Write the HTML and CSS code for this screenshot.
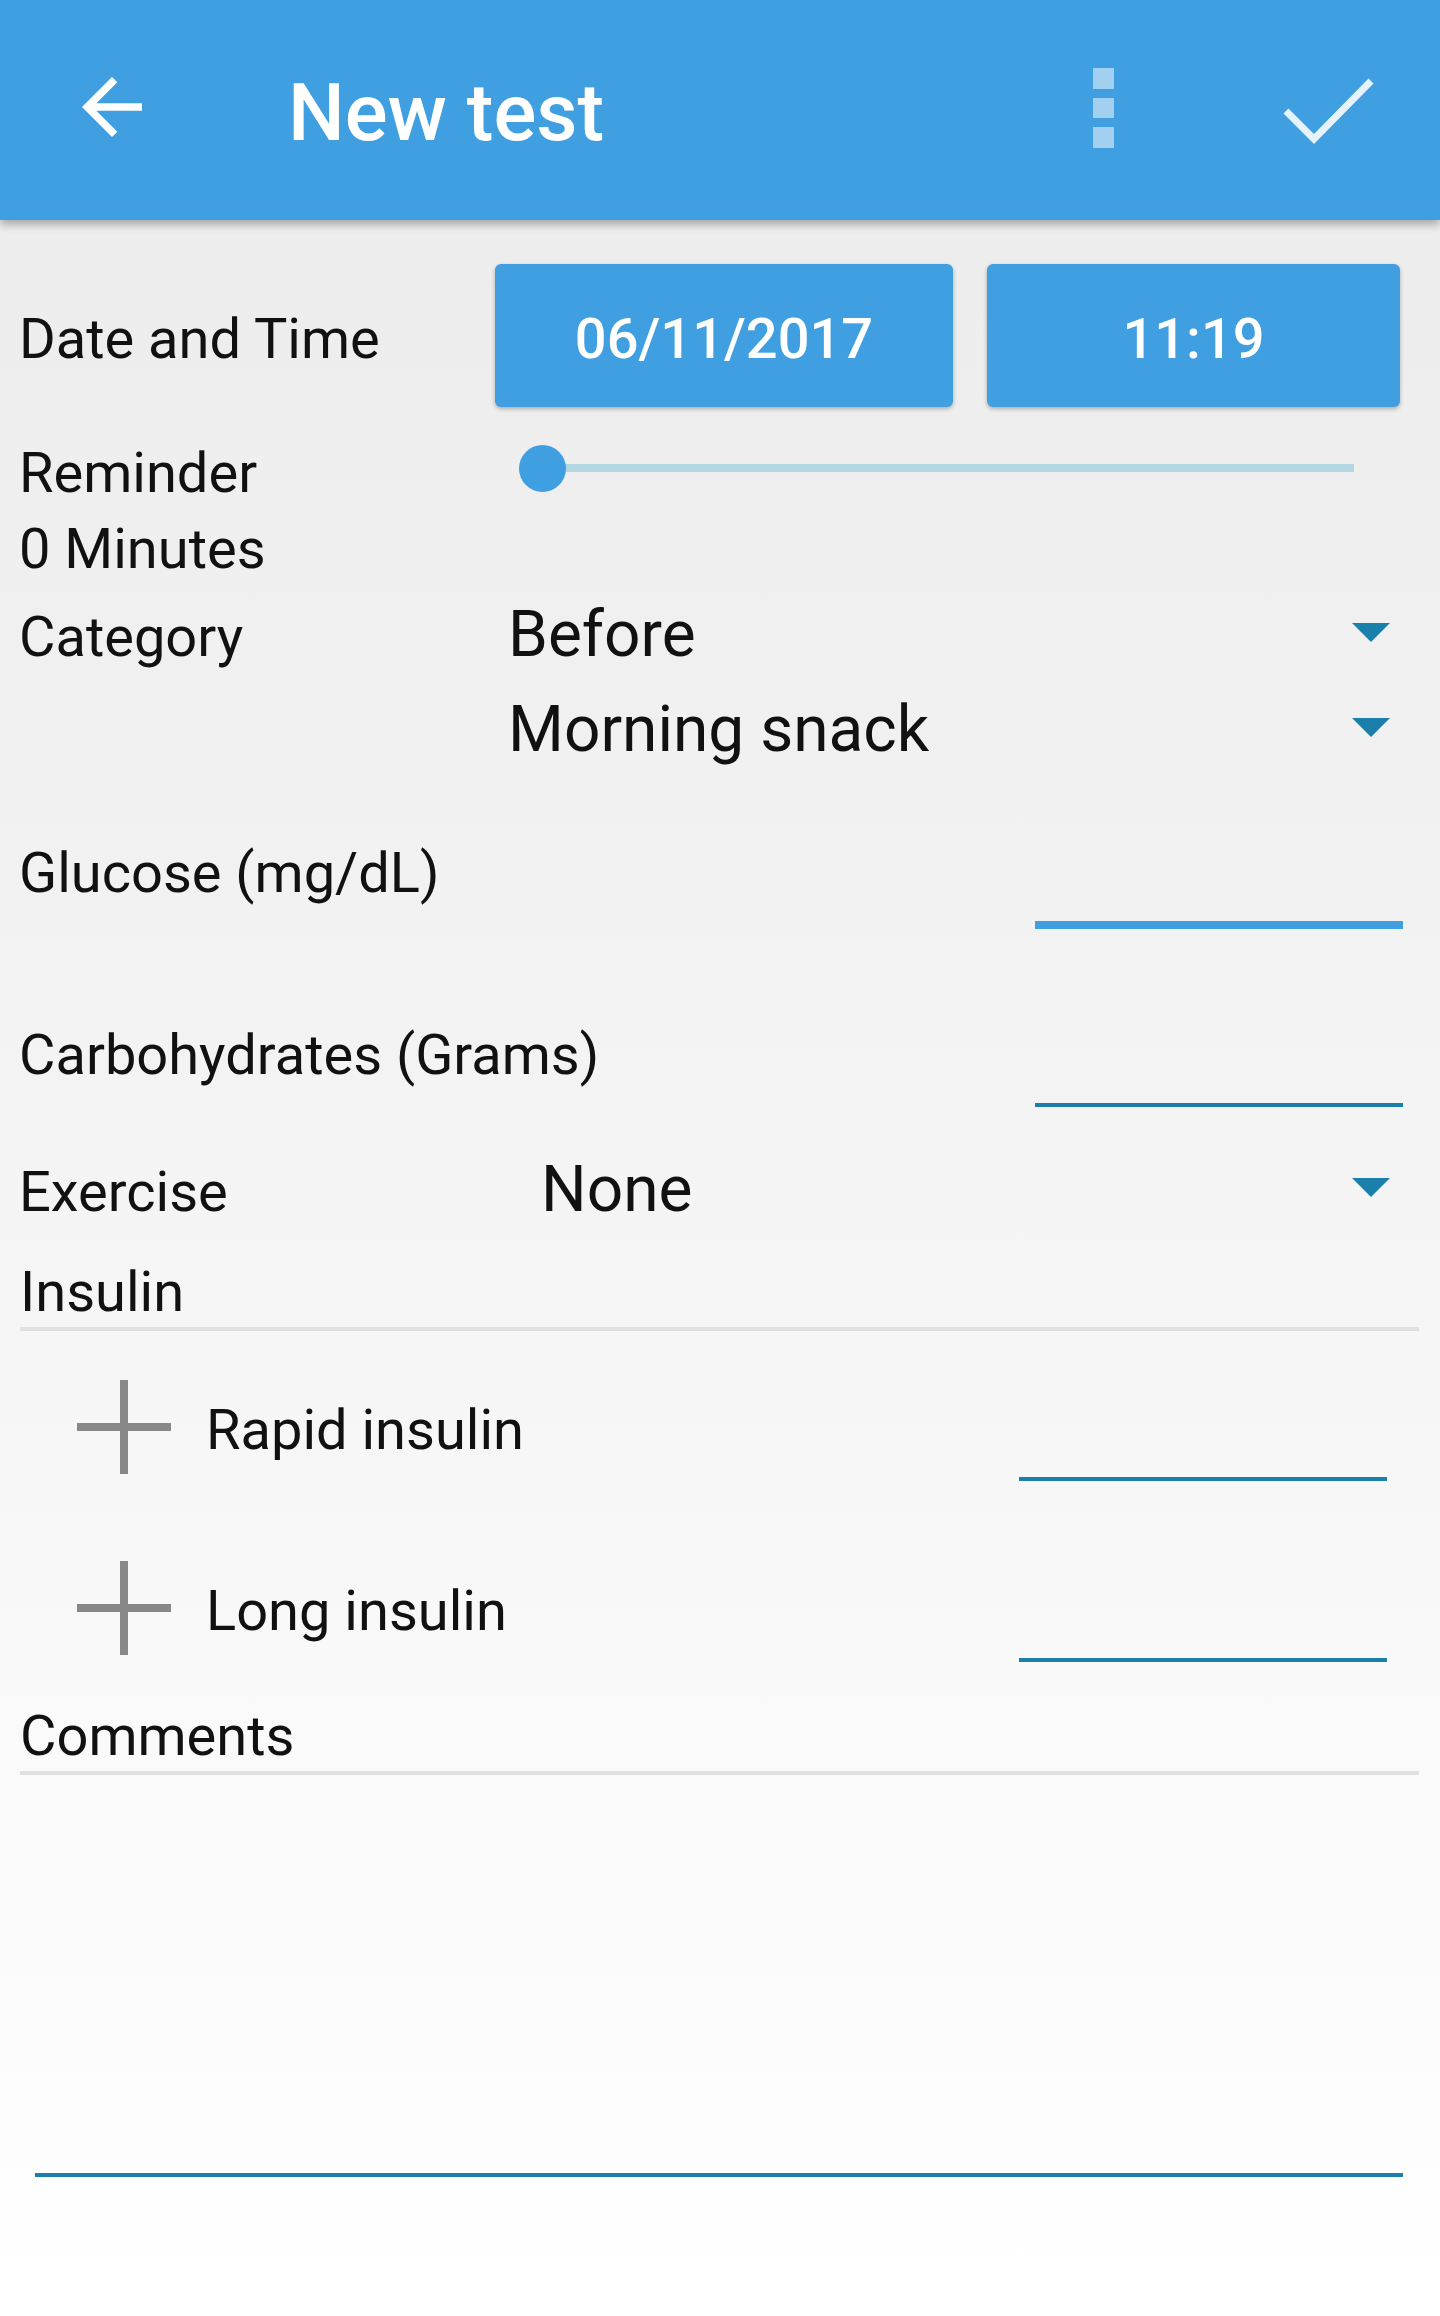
FILE: index.html
```html
<!DOCTYPE html>
<html lang="en">
<head>
<meta charset="utf-8">
<title>New test</title>
<link rel="stylesheet" href="styles.css">
</head>
<body>
<header class="appbar">
  <svg class="back" viewBox="0 0 24 24" width="90" height="90"><path fill="#ffffff" d="M20 11H7.83l5.59-5.59L12 4l-8 8 8 8 1.41-1.41L7.83 13H20v-2z"/></svg>
  <h1 class="title">New test</h1>
  <svg class="kebab" viewBox="0 0 21 80" width="21" height="80"><rect x="0" y="0" width="21" height="21"/><rect x="0" y="30" width="21" height="20"/><rect x="0" y="59" width="21" height="21"/></svg>
  <svg class="check" viewBox="0 0 100 80" width="100" height="80"><polyline points="7,41 35,69 92,11" fill="none" stroke="#e6f3fc" stroke-width="7"/></svg>
</header>
<main class="form">
  <div class="row row-date">
    <div class="label label-col">Date and Time</div>
    <div class="btn btn-date">06/11/2017</div>
    <div class="btn btn-time">11:19</div>
  </div>
  <div class="row row-reminder">
    <div class="label label-col">Reminder<br>0 Minutes</div>
    <div class="slider"><div class="track"><div class="thumb"></div></div></div>
  </div>
  <div class="row row-spinner">
    <div class="label label-col label-top">Category</div>
    <div class="spinners">
      <div class="spinner"><span class="value">Before</span><span class="caret"></span></div>
      <div class="spinner"><span class="value">Morning snack</span><span class="caret"></span></div>
    </div>
  </div>
  <div class="row row-input row-glucose">
    <div class="label">Glucose (mg/dL)</div>
    <div class="field field-focused"></div>
  </div>
  <div class="row row-input row-carbs">
    <div class="label">Carbohydrates (Grams)</div>
    <div class="field"></div>
  </div>
  <div class="row row-spinner row-exercise">
    <div class="label label-col label-top">Exercise</div>
    <div class="spinners">
      <div class="spinner spinner-wide"><span class="value">None</span><span class="caret"></span></div>
    </div>
  </div>
  <div class="section section-insulin">Insulin</div>
  <div class="row row-insulin row-rapid">
    <svg class="plus" viewBox="0 0 94 94" width="94" height="94"><rect x="43" y="0" width="8" height="94"/><rect x="0" y="43" width="94" height="8"/></svg>
    <div class="label insulin-label">Rapid insulin</div>
    <div class="field field-insulin"></div>
  </div>
  <div class="row row-insulin row-long">
    <svg class="plus" viewBox="0 0 94 94" width="94" height="94"><rect x="43" y="0" width="8" height="94"/><rect x="0" y="43" width="94" height="8"/></svg>
    <div class="label insulin-label">Long insulin</div>
    <div class="field field-insulin"></div>
  </div>
  <div class="section section-comments">Comments</div>
  <div class="comments-box"></div>
</main>
</body>
</html>
```
FILE: styles.css
```css
* { box-sizing: border-box; }
html, body { margin: 0; padding: 0; }
body {
  width: 1440px;
  min-height: 2316px;
  font-family: Roboto, "Liberation Sans", sans-serif;
  color: #111111;
  background: linear-gradient(to bottom, #ebebeb 0, #f3f3f3 45%, #ffffff 100%);
}

.appbar {
  height: 220px;
  background: #409fe0;
  display: flex;
  align-items: center;
  padding: 0 61px 0 67px;
  box-shadow: 0 4px 9px rgba(0, 0, 0, 0.32);
  position: relative;
  z-index: 1;
}
.back { display: block; margin-bottom: 6px; flex: none; }
.title {
  margin: 0 0 0 131px;
  padding-top: 5px;
  font-size: 80px;
  font-weight: 500;
  line-height: 1;
  color: #ffffff;
}
.kebab { display: block; margin-left: auto; fill: #a3d0f1; margin-bottom: 4px; }
.check { display: block; margin-left: 165px; }

.form {
  padding: 0 21px 0 19px;
}
.row { display: flex; align-items: flex-start; }
.label {
  font-size: 56px;
  line-height: 76px;
  white-space: nowrap;
}
.label-col { width: 476px; flex: none; }

.row-date { margin-top: 44px; height: 143px; }
.row-date .label { margin-top: 37px; }
.btn {
  height: 143px;
  padding-top: 37px;
  background: #409fe0;
  color: #ffffff;
  font-size: 56px;
  font-weight: 500;
  line-height: 76px;
  text-align: center;
  border-radius: 6px;
  box-shadow: 0 2px 4px rgba(0, 0, 0, 0.28);
}
.btn-date { width: 458px; }
.btn-time { width: 413px; margin-left: 34px; }

.row-reminder { margin-top: 28px; }
.slider { flex: 1; padding-left: 47px; padding-top: 29px; }
.track {
  position: relative;
  width: 812px;
  height: 8px;
  background: #b2d6e2;
}
.thumb {
  position: absolute;
  left: -23.5px;
  top: -19.5px;
  width: 47px;
  height: 47px;
  border-radius: 50%;
  background: #409fe0;
}

.label-top { margin-top: 12px; }
.spinners { flex: 1; display: flex; flex-direction: column; }
.spinner {
  height: 95px;
  display: flex;
  align-items: flex-start;
  padding-left: 13px;
  padding-right: 29px;
}
.spinner-wide { padding-left: 46px; }
.value {
  font-size: 64px;
  line-height: 95px;
  color: #111111;
  white-space: nowrap;
}
.caret {
  margin-left: auto;
  margin-top: 36px;
  width: 0;
  height: 0;
  border-left: 19.5px solid transparent;
  border-right: 19.5px solid transparent;
  border-top: 19px solid #1a7faa;
}

.row-glucose { margin-top: 58px; }
.row-carbs { margin-top: 88px; }
.field {
  margin-left: auto;
  margin-right: 16px;
  width: 368px;
  height: 90px;
  border-bottom: 4px solid #1a7faa;
}
.row-glucose .field { height: 94px; }
.field-focused { border-bottom: 8px solid #409fe0; }

.row-exercise { margin-top: 35px; }

.section {
  margin-left: 1px;
  font-size: 56px;
  line-height: 66px;
  padding-bottom: 2px;
  border-bottom: 4px solid #e0e0e0;
}
.section-insulin { margin-top: 22px; }
.section-comments { margin-top: 41px; }

.row-rapid { margin-top: 49px; }
.row-long { margin-top: 80px; }
.plus { display: block; flex: none; margin-left: 58px; fill: #888888; }
.insulin-label { margin-left: 35px; margin-top: 12px; }
.field-insulin {
  margin-right: 32px;
  height: 101px;
}

.comments-box {
  margin: 0 16px 0 16px;
  height: 402px;
  border-bottom: 4px solid #1a7faa;
}
```
